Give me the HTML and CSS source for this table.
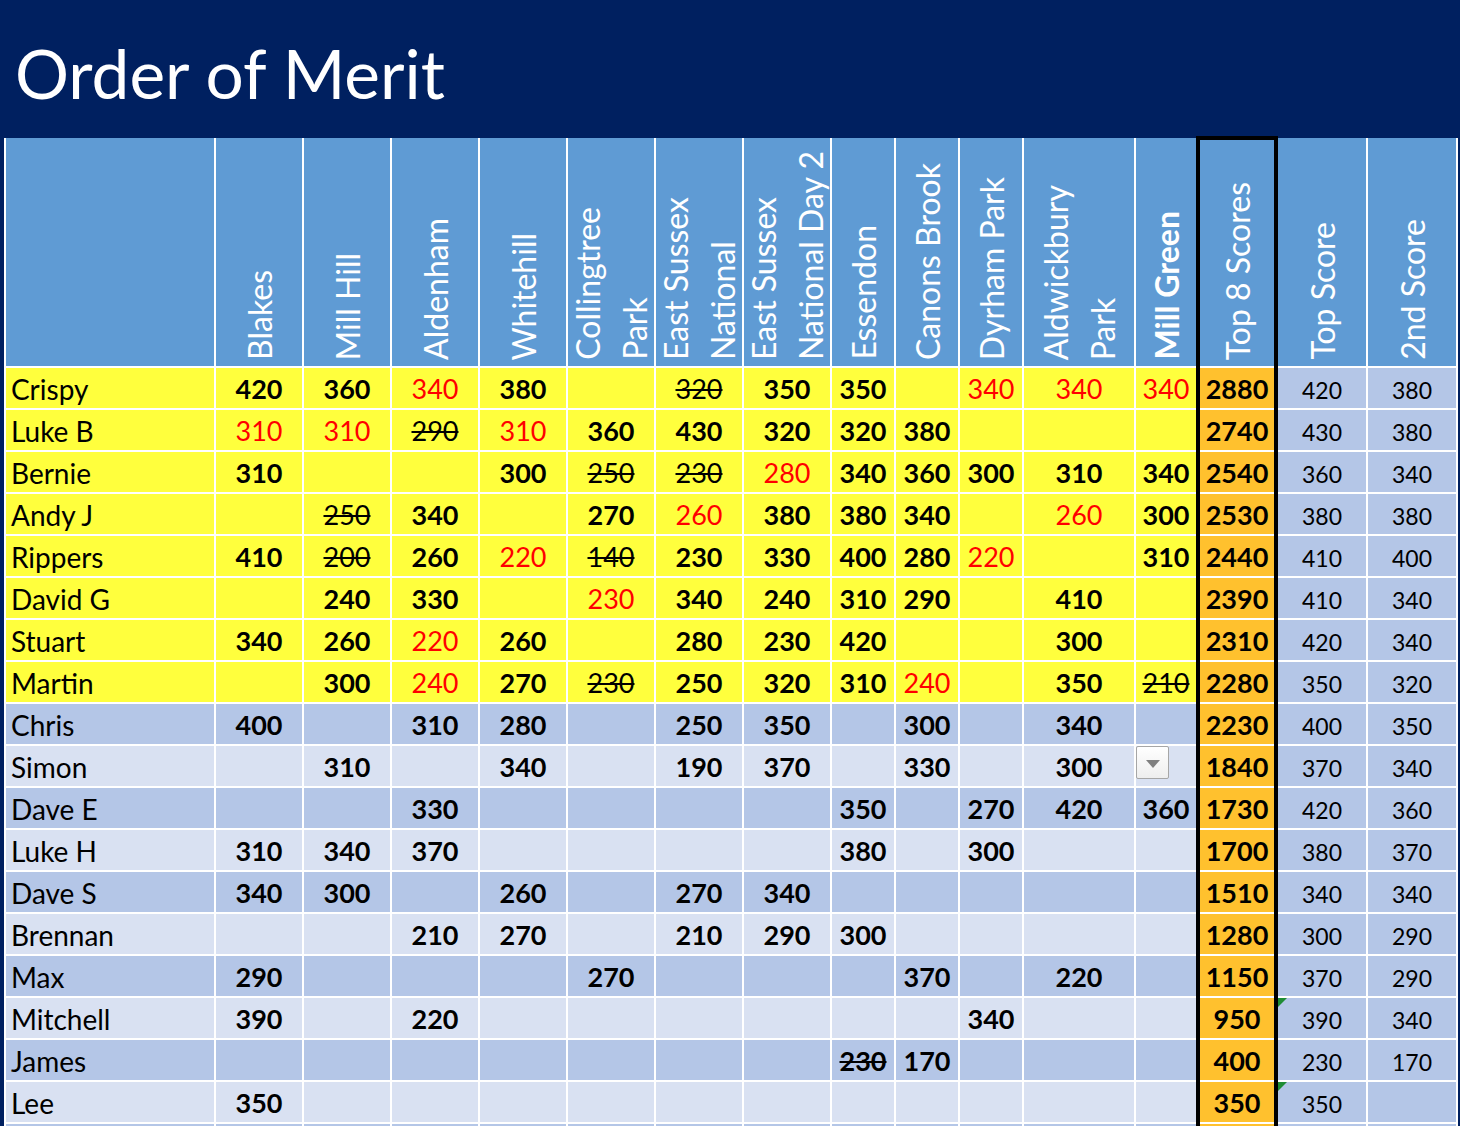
FILE: index.html
```html
<!DOCTYPE html>
<html lang="en">
<head>
<meta charset="utf-8">
<title>Order of Merit</title>
<link rel="stylesheet" href="styles.css">
</head>
<body>
<header class="band"><h1 class="title">Order of Merit</h1></header>
<main class="wrap">
  <div class="grid">
    <div class="row hd">
      <div class="h"></div>
      <div class="h"><span class="v">Blakes</span></div>
      <div class="h"><span class="v">Mill Hill</span></div>
      <div class="h"><span class="v">Aldenham</span></div>
      <div class="h"><span class="v">Whitehill</span></div>
      <div class="h"><span class="v">Collingtree<br>Park</span></div>
      <div class="h"><span class="v">East Sussex<br>National</span></div>
      <div class="h"><span class="v">East Sussex<br>National Day 2</span></div>
      <div class="h"><span class="v">Essendon</span></div>
      <div class="h"><span class="v">Canons Brook</span></div>
      <div class="h"><span class="v">Dyrham Park</span></div>
      <div class="h"><span class="v">Aldwickbury<br>Park</span></div>
      <div class="h"><span class="v bold">Mill Green</span></div>
      <div class="h"><span class="v">Top 8 Scores</span></div>
      <div class="h"><span class="v">Top Score</span></div>
      <div class="h"><span class="v">2nd Score</span></div>
    </div>

    <div class="row top">
      <div class="c nm">Crispy</div>
      <div class="c b">420</div><div class="c b">360</div><div class="c r">340</div><div class="c b">380</div>
      <div class="c"></div><div class="c s">320</div><div class="c b">350</div><div class="c b">350</div>
      <div class="c"></div><div class="c r">340</div><div class="c r">340</div><div class="c r">340</div>
      <div class="c t8">2880</div><div class="c ts">420</div><div class="c ts">380</div>
    </div>
    <div class="row top">
      <div class="c nm">Luke B</div>
      <div class="c r">310</div><div class="c r">310</div><div class="c s">290</div><div class="c r">310</div>
      <div class="c b">360</div><div class="c b">430</div><div class="c b">320</div><div class="c b">320</div>
      <div class="c b">380</div><div class="c"></div><div class="c"></div><div class="c"></div>
      <div class="c t8">2740</div><div class="c ts">430</div><div class="c ts">380</div>
    </div>
    <div class="row top">
      <div class="c nm">Bernie</div>
      <div class="c b">310</div><div class="c"></div><div class="c"></div><div class="c b">300</div>
      <div class="c s">250</div><div class="c s">230</div><div class="c r">280</div><div class="c b">340</div>
      <div class="c b">360</div><div class="c b">300</div><div class="c b">310</div><div class="c b">340</div>
      <div class="c t8">2540</div><div class="c ts">360</div><div class="c ts">340</div>
    </div>
    <div class="row top">
      <div class="c nm">Andy J</div>
      <div class="c"></div><div class="c s">250</div><div class="c b">340</div><div class="c"></div>
      <div class="c b">270</div><div class="c r">260</div><div class="c b">380</div><div class="c b">380</div>
      <div class="c b">340</div><div class="c"></div><div class="c r">260</div><div class="c b">300</div>
      <div class="c t8">2530</div><div class="c ts">380</div><div class="c ts">380</div>
    </div>
    <div class="row top">
      <div class="c nm">Rippers</div>
      <div class="c b">410</div><div class="c s">200</div><div class="c b">260</div><div class="c r">220</div>
      <div class="c s">140</div><div class="c b">230</div><div class="c b">330</div><div class="c b">400</div>
      <div class="c b">280</div><div class="c r">220</div><div class="c"></div><div class="c b">310</div>
      <div class="c t8">2440</div><div class="c ts">410</div><div class="c ts">400</div>
    </div>
    <div class="row top">
      <div class="c nm">David G</div>
      <div class="c"></div><div class="c b">240</div><div class="c b">330</div><div class="c"></div>
      <div class="c r">230</div><div class="c b">340</div><div class="c b">240</div><div class="c b">310</div>
      <div class="c b">290</div><div class="c"></div><div class="c b">410</div><div class="c"></div>
      <div class="c t8">2390</div><div class="c ts">410</div><div class="c ts">340</div>
    </div>
    <div class="row top">
      <div class="c nm">Stuart</div>
      <div class="c b">340</div><div class="c b">260</div><div class="c r">220</div><div class="c b">260</div>
      <div class="c"></div><div class="c b">280</div><div class="c b">230</div><div class="c b">420</div>
      <div class="c"></div><div class="c"></div><div class="c b">300</div><div class="c"></div>
      <div class="c t8">2310</div><div class="c ts">420</div><div class="c ts">340</div>
    </div>
    <div class="row top">
      <div class="c nm">Martin</div>
      <div class="c"></div><div class="c b">300</div><div class="c r">240</div><div class="c b">270</div>
      <div class="c s">230</div><div class="c b">250</div><div class="c b">320</div><div class="c b">310</div>
      <div class="c r">240</div><div class="c"></div><div class="c b">350</div><div class="c s">210</div>
      <div class="c t8">2280</div><div class="c ts">350</div><div class="c ts">320</div>
    </div>

    <div class="row dk">
      <div class="c nm">Chris</div>
      <div class="c b">400</div><div class="c"></div><div class="c b">310</div><div class="c b">280</div>
      <div class="c"></div><div class="c b">250</div><div class="c b">350</div><div class="c"></div>
      <div class="c b">300</div><div class="c"></div><div class="c b">340</div><div class="c"></div>
      <div class="c t8">2230</div><div class="c ts">400</div><div class="c ts">350</div>
    </div>
    <div class="row lt">
      <div class="c nm">Simon</div>
      <div class="c"></div><div class="c b">310</div><div class="c"></div><div class="c b">340</div>
      <div class="c"></div><div class="c b">190</div><div class="c b">370</div><div class="c"></div>
      <div class="c b">330</div><div class="c"></div><div class="c b">300</div>
      <div class="c ddcell"><span class="dd"></span></div>
      <div class="c t8">1840</div><div class="c ts">370</div><div class="c ts">340</div>
    </div>
    <div class="row dk">
      <div class="c nm">Dave E</div>
      <div class="c"></div><div class="c"></div><div class="c b">330</div><div class="c"></div>
      <div class="c"></div><div class="c"></div><div class="c"></div><div class="c b">350</div>
      <div class="c"></div><div class="c b">270</div><div class="c b">420</div><div class="c b">360</div>
      <div class="c t8">1730</div><div class="c ts">420</div><div class="c ts">360</div>
    </div>
    <div class="row lt">
      <div class="c nm">Luke H</div>
      <div class="c b">310</div><div class="c b">340</div><div class="c b">370</div><div class="c"></div>
      <div class="c"></div><div class="c"></div><div class="c"></div><div class="c b">380</div>
      <div class="c"></div><div class="c b">300</div><div class="c"></div><div class="c"></div>
      <div class="c t8">1700</div><div class="c ts">380</div><div class="c ts">370</div>
    </div>
    <div class="row dk">
      <div class="c nm">Dave S</div>
      <div class="c b">340</div><div class="c b">300</div><div class="c"></div><div class="c b">260</div>
      <div class="c"></div><div class="c b">270</div><div class="c b">340</div><div class="c"></div>
      <div class="c"></div><div class="c"></div><div class="c"></div><div class="c"></div>
      <div class="c t8">1510</div><div class="c ts">340</div><div class="c ts">340</div>
    </div>
    <div class="row lt">
      <div class="c nm">Brennan</div>
      <div class="c"></div><div class="c"></div><div class="c b">210</div><div class="c b">270</div>
      <div class="c"></div><div class="c b">210</div><div class="c b">290</div><div class="c b">300</div>
      <div class="c"></div><div class="c"></div><div class="c"></div><div class="c"></div>
      <div class="c t8">1280</div><div class="c ts">300</div><div class="c ts">290</div>
    </div>
    <div class="row dk">
      <div class="c nm">Max</div>
      <div class="c b">290</div><div class="c"></div><div class="c"></div><div class="c"></div>
      <div class="c b">270</div><div class="c"></div><div class="c"></div><div class="c"></div>
      <div class="c b">370</div><div class="c"></div><div class="c b">220</div><div class="c"></div>
      <div class="c t8">1150</div><div class="c ts">370</div><div class="c ts">290</div>
    </div>
    <div class="row lt">
      <div class="c nm">Mitchell</div>
      <div class="c b">390</div><div class="c"></div><div class="c b">220</div><div class="c"></div>
      <div class="c"></div><div class="c"></div><div class="c"></div><div class="c"></div>
      <div class="c"></div><div class="c b">340</div><div class="c"></div><div class="c"></div>
      <div class="c t8">950</div><div class="c ts flag">390</div><div class="c ts">340</div>
    </div>
    <div class="row dk">
      <div class="c nm">James</div>
      <div class="c"></div><div class="c"></div><div class="c"></div><div class="c"></div>
      <div class="c"></div><div class="c"></div><div class="c"></div><div class="c b s">230</div>
      <div class="c b">170</div><div class="c"></div><div class="c"></div><div class="c"></div>
      <div class="c t8">400</div><div class="c ts">230</div><div class="c ts">170</div>
    </div>
    <div class="row lt">
      <div class="c nm">Lee</div>
      <div class="c b">350</div><div class="c"></div><div class="c"></div><div class="c"></div>
      <div class="c"></div><div class="c"></div><div class="c"></div><div class="c"></div>
      <div class="c"></div><div class="c"></div><div class="c"></div><div class="c"></div>
      <div class="c t8">350</div><div class="c ts flag">350</div><div class="c ts"></div>
    </div>
    <div class="row dk">
      <div class="c nm"></div>
      <div class="c"></div><div class="c"></div><div class="c"></div><div class="c"></div>
      <div class="c"></div><div class="c"></div><div class="c"></div><div class="c"></div>
      <div class="c"></div><div class="c"></div><div class="c"></div><div class="c"></div>
      <div class="c t8"></div><div class="c ts"></div><div class="c ts"></div>
    </div>
  </div>
  <div class="t8box"></div>
</main>
</body>
</html>
```

FILE: styles.css
```css
html, body {
  margin: 0;
  padding: 0;
}
body {
  background: #002060;
  width: 1460px;
  font-family: Lato, "Open Sans", "Liberation Sans", sans-serif;
  color: #000;
}
.band {
  height: 138px;
  box-sizing: border-box;
  padding: 39px 0 0 15px;
}
.title {
  margin: 0;
  font-size: 67.5px;
  line-height: 67px;
  font-weight: 400;
  color: #fff;
}
.wrap {
  position: relative;
}
.grid {
  display: grid;
  grid-template-columns: 208px repeat(7, 86px) repeat(3, 62px) 110px 60px 78px 88px 88px;
  grid-template-rows: 228px;
  grid-auto-rows: 40px;
  gap: 2px;
  padding: 0 2px;
  margin-left: 4px;
  width: max-content;
  background: #fff;
}
.row {
  display: contents;
}
.h {
  background: #5f9bd4;
  color: #fff;
  display: flex;
  justify-content: center;
  align-items: flex-end;
  padding-bottom: 6px;
  box-sizing: border-box;
  font-size: 32px;
  overflow: hidden;
}
.v {
  writing-mode: vertical-rl;
  transform: rotate(180deg);
  line-height: 47px;
  white-space: nowrap;
}
.bold {
  font-weight: 700;
}
.c {
  box-sizing: border-box;
  font-size: 27px;
  line-height: 40px;
  padding-top: 1px;
  text-align: center;
  white-space: nowrap;
  overflow: hidden;
}
.top > .c { background: #ffff3d; }
.dk > .c { background: #b4c6e7; }
.lt > .c { background: #d9e1f2; }
.nm {
  text-align: left;
  padding-left: 5px;
  font-size: 28px;
}
.b { font-weight: 700; }
.r { color: #ff0000; }
.s { text-decoration: line-through; }
.row > .t8 {
  background: #ffc12e;
  font-weight: 700;
}
.row > .ts {
  background: #b4c6e7;
  font-size: 23px;
  padding-top: 5px;
  line-height: 35px;
}
.flag {
  position: relative;
}
.flag::before {
  content: "";
  position: absolute;
  left: 0;
  top: 0;
  border-top: 9px solid #1e8c34;
  border-right: 9px solid transparent;
}
.row > .ddcell {
  position: relative;
  overflow: visible;
}
.dd {
  position: absolute;
  left: 0;
  top: 0;
  width: 33px;
  height: 33px;
  box-sizing: border-box;
  border: 1px solid #a6a6a6;
  border-radius: 2px;
  background: linear-gradient(#ffffff, #eeeeee);
}
.dd::after {
  content: "";
  position: absolute;
  left: 9px;
  top: 13px;
  border-left: 7px solid transparent;
  border-right: 7px solid transparent;
  border-top: 8px solid #7f7f7f;
}
.t8box {
  position: absolute;
  left: 1196px;
  top: -2px;
  bottom: 0;
  width: 82px;
  box-sizing: border-box;
  border: 4px solid #000;
  pointer-events: none;
}
```
